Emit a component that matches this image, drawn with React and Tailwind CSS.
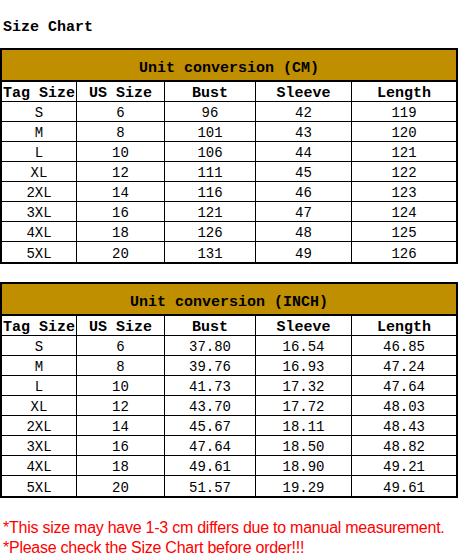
import React from 'react';

const cols = ['Tag Size', 'US Size', 'Bust', 'Sleeve', 'Length'];

const cmRows = [
    ['S', '6', '96', '42', '119'],
    ['M', '8', '101', '43', '120'],
    ['L', '10', '106', '44', '121'],
    ['XL', '12', '111', '45', '122'],
    ['2XL', '14', '116', '46', '123'],
    ['3XL', '16', '121', '47', '124'],
    ['4XL', '18', '126', '48', '125'],
    ['5XL', '20', '131', '49', '126'],
];

const inchRows = [
    ['S', '6', '37.80', '16.54', '46.85'],
    ['M', '8', '39.76', '16.93', '47.24'],
    ['L', '10', '41.73', '17.32', '47.64'],
    ['XL', '12', '43.70', '17.72', '48.03'],
    ['2XL', '14', '45.67', '18.11', '48.43'],
    ['3XL', '16', '47.64', '18.50', '48.82'],
    ['4XL', '18', '49.61', '18.90', '49.21'],
    ['5XL', '20', '51.57', '19.29', '49.61'],
];

const Row = ({ cells, head, last }) => (
    <div
        className={`grid grid-cols-[75px_88px_91px_96px_104px] h-[20px] ${last ? '' : 'border-b border-black'} ${
            head ? 'font-bold text-[15px]' : 'text-[14px]'
        }`}
    >
        {cells.map((c, i) => (
            <div
                key={i}
                className={`flex items-center justify-center whitespace-nowrap leading-none pt-[3px] ${i < 4 ? 'border-r border-black' : ''}`}
            >
                {c}
            </div>
        ))}
    </div>
);

const SizeTable = ({ title, rows }) => (
    <div className="w-[458px] border-2 border-black">
        <div className="h-[32px] bg-[#bf8f00] border-b-2 border-black flex items-center justify-center font-bold text-[15px] pt-[8px]">
            {title}
        </div>
        <Row cells={cols} head />
        {rows.map((r, i) => (
            <Row key={i} cells={r} last={i === rows.length - 1} />
        ))}
    </div>
);

export default function App() {
    return (
        <div className="w-[460px] h-[556px] bg-white text-black font-['Liberation_Mono',monospace]">
            <div className="pt-[18px] pl-[3px] h-[48px] text-[15px] font-bold leading-[20px]">Size Chart</div>
            <SizeTable title="Unit conversion (CM)" rows={cmRows} />
            <div className="h-[18px]" />
            <SizeTable title="Unit conversion (INCH)" rows={inchRows} />
            <div className="pt-[20px] pl-[3px] font-['Liberation_Sans',Arial,sans-serif] text-[#ff0000] text-[16px] leading-[20px] tracking-[-0.25px]">
                <div>*This size may have 1-3 cm differs due to manual measurement.</div>
                <div>*Please check the Size Chart before order!!!</div>
            </div>
        </div>
    );
}
